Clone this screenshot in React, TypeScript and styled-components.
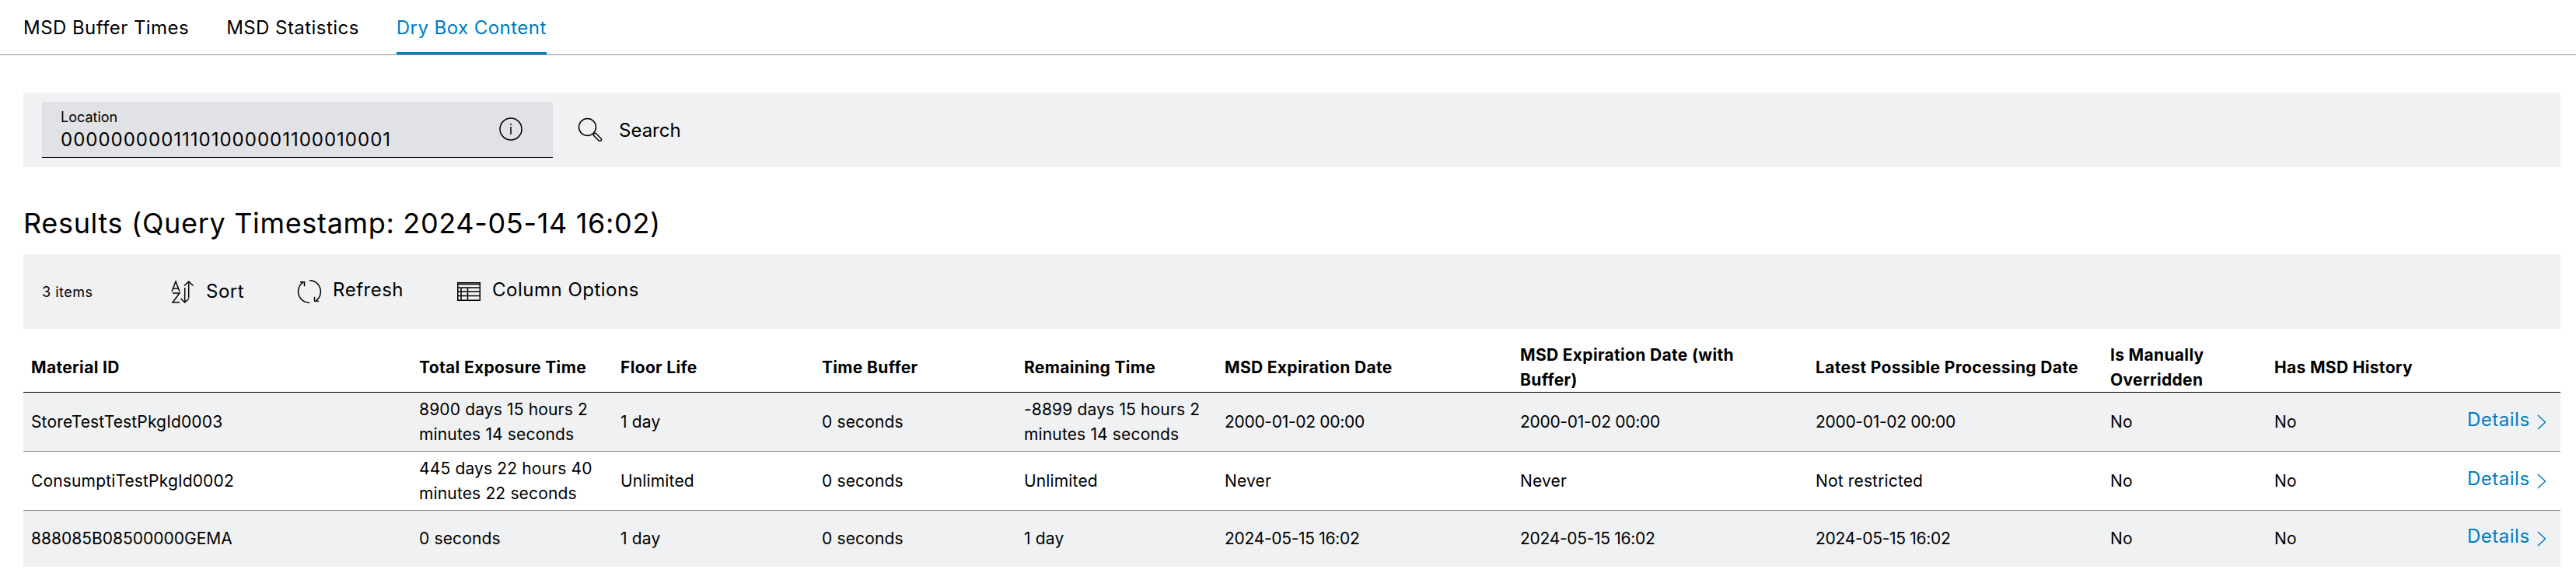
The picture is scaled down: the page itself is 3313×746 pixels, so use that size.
import React from 'react';
import styled, { createGlobalStyle } from 'styled-components';

const Global = createGlobalStyle`
  html, body { margin: 0; padding: 0; background: #fff; }
  body { font-family: "Inter", "Noto Sans", sans-serif; color: #000; }
`;

const Tabs = styled.nav`
  display: flex;
  gap: 48px;
  height: 70px;
  padding-left: 30px;
  border-bottom: 1px solid #8a9097;
`;
const Tab = styled.div<{ $active?: boolean }>`
  display: flex;
  align-items: center;
  box-sizing: border-box;
  height: 70px;
  font-size: 24px;
  letter-spacing: 0.45px;
  color: ${p => (p.$active ? '#007bc0' : '#000')};
  border-bottom: 3px solid ${p => (p.$active ? '#007bc0' : 'transparent')};
  border-top: 3px solid transparent;
`;
const Content = styled.main`
  padding: 48px 20px 0 30px;
`;
const SearchBar = styled.section`
  display: flex;
  align-items: center;
  height: 96px;
  padding-left: 24px;
  background: #eff1f2;
`;
const Field = styled.div`
  position: relative;
  box-sizing: border-box;
  width: 657px;
  height: 72px;
  padding: 12px 24px 0;
  background: #e0e2e5;
  border-bottom: 1px solid #000;
`;
const FieldLabel = styled.div`
  font-size: 18px;
  line-height: 16px;
`;
const FieldValue = styled.div`
  font-size: 24px;
  line-height: 36px;
  margin-top: 3px;
  letter-spacing: 1px;
`;
const FieldIcon = styled.svg`
  position: absolute;
  right: 36px;
  top: 17px;
  width: 36px;
  height: 36px;
`;
const SearchButton = styled.button`
  display: flex;
  align-items: center;
  gap: 19px;
  margin-left: 30px;
  padding: 0;
  border: 0;
  background: none;
  font: inherit;
  font-size: 24px;
  color: #000;
`;
const Title = styled.h2`
  margin: 0;
  padding-top: 48px;
  height: 64px;
  font-size: 36px;
  font-weight: 400;
  line-height: 48px;
  letter-spacing: 0.67px;
`;
const Toolbar = styled.section`
  display: flex;
  align-items: center;
  gap: 66px;
  height: 96px;
  padding-left: 24px;
  background: #eff1f2;
`;
const Count = styled.div`
  width: 97px;
  font-size: 18px;
  letter-spacing: 0.5px;
`;
const ToolButton = styled.button`
  display: flex;
  align-items: center;
  gap: 12px;
  padding: 0;
  border: 0;
  background: none;
  font: inherit;
  color: #000;
`;
const ToolLabel = styled.span<{ $raised?: boolean }>`
  font-size: 24px;
  line-height: 36px;
  letter-spacing: 0.5px;
  padding-bottom: ${p => (p.$raised ? '4px' : '0')};
`;
const Icon = styled.svg`
  width: 36px;
  height: 36px;
  flex: none;
  fill: none;
  stroke: #000;
  stroke-width: 1.5;
`;
const Table = styled.table`
  width: 100%;
  margin-top: 18px;
  border-collapse: separate;
  border-spacing: 0;
  table-layout: fixed;
  font-size: 21px;
  line-height: 31.5px;
`;
const HeadCell = styled.th`
  padding: 0 28px 0 10px;
  height: 63px;
  text-align: left;
  font-weight: 700;
  letter-spacing: 0.33px;
  vertical-align: middle;
  border-bottom: 1px solid #000;
`;
const Row = styled.tr<{ $alt?: boolean }>`
  height: 72px;
  background: ${p => (p.$alt ? '#eff1f2' : '#fff')};
  &:not(:last-child) > td {
    border-bottom: 1px solid #8a9097;
  }
`;
const Cell = styled.td<{ $tracking?: string }>`
  padding: 6px 10px;
  vertical-align: middle;
  letter-spacing: ${p => p.$tracking ?? '0.15px'};
`;
const DetailsCell = styled(Cell)`
  padding-right: 19px;
`;
const DetailsLink = styled.a`
  display: flex;
  justify-content: flex-end;
  align-items: center;
  gap: 9px;
  color: #007bc0;
  font-size: 24px;
  letter-spacing: 0.5px;
`;
const DetailsText = styled.span`
  line-height: 30px;
  padding-bottom: 6px;
`;
const Chevron = styled.svg`
  width: 12px;
  height: 20px;
  fill: none;
  stroke: #007bc0;
  stroke-width: 1.5;
`;

const widths = [499, 259, 259, 260, 258, 380, 380, 379, 211, 248, 130];
const headers = ['Material ID', 'Total Exposure Time', 'Floor Life', 'Time Buffer', 'Remaining Time', 'MSD Expiration Date', 'MSD Expiration Date (with Buffer)', 'Latest Possible Processing Date', 'Is Manually Overridden', 'Has MSD History', ''];
const rows = [
  ['StoreTestTestPkgId0003', '8900 days 15 hours 2 minutes 14 seconds', '1 day', '0 seconds', '-8899 days 15 hours 2 minutes 14 seconds', '2000-01-02 00:00', '2000-01-02 00:00', '2000-01-02 00:00', 'No', 'No'],
  ['ConsumptiTestPkgId0002', '445 days 22 hours 40 minutes 22 seconds', 'Unlimited', '0 seconds', 'Unlimited', 'Never', 'Never', 'Not restricted', 'No', 'No'],
  ['888085B08500000GEMA', '0 seconds', '1 day', '0 seconds', '1 day', '2024-05-15 16:02', '2024-05-15 16:02', '2024-05-15 16:02', 'No', 'No'],
];

const trackingOf = (value: string) => {
  if (/^\d{4}-\d{2}-\d{2}/.test(value)) return '-0.3px';
  if (/^\d{6}/.test(value)) return '0';
  return undefined;
};

export default function App() {
  return (
    <>
      <Global />
      <Tabs>
        <Tab>MSD Buffer Times</Tab>
        <Tab>MSD Statistics</Tab>
        <Tab $active>Dry Box Content</Tab>
      </Tabs>
      <Content>
        <SearchBar>
          <Field>
            <FieldLabel>Location</FieldLabel>
            <FieldValue>00000000011101000001100010001</FieldValue>
            <FieldIcon viewBox="0 0 36 36" fill="none" stroke="#000" strokeWidth="1.5">
              <circle cx="18" cy="18" r="14" />
              <path d="M18 15v10" />
              <path d="M18 11v2" />
            </FieldIcon>
          </Field>
          <SearchButton>
            <Icon viewBox="0 0 36 36">
              <circle cx="14.5" cy="14.5" r="11" />
              <rect x="23" y="21" width="12.5" height="4" rx="2" transform="rotate(45 23 23)" />
            </Icon>
            Search
          </SearchButton>
        </SearchBar>
        <Title>Results (Query Timestamp: 2024-05-14 16:02)</Title>
        <Toolbar>
          <Count>3 items</Count>
          <ToolButton>
            <Icon viewBox="0 0 36 36">
              <path d="M4 18L9 5l5 13M6 14h6M5 20h9L5 32h9" />
              <path d="M25.7 26V5M20 10.500L25.700 5l5.800 5.500M20.700 13v19M15.500 27l5.200 5 5.300-5" />
            </Icon>
            <ToolLabel>Sort</ToolLabel>
          </ToolButton>
          <ToolButton>
            <Icon viewBox="0 0 36 36">
              <path d="M9.700 6.100A14.500 14.500 0 0 0 18 32.500M6 5.700h5.500v5.600" />
              <path d="M18 3.500a14.500 14.500 0 0 1 8.300 26.400M30 30.300h-5.500v-5.600" />
            </Icon>
            <ToolLabel $raised>Refresh</ToolLabel>
          </ToolButton>
          <ToolButton>
            <Icon viewBox="0 0 36 36">
              <rect x="3.750" y="6.750" width="28.500" height="22.500" />
              <path d="M3.750 8.500h28.500M3.750 13h28.500M3.750 18h28.500M3.750 23.500h28.500M8 13v16M16.500 13v16" />
            </Icon>
            <ToolLabel $raised>Column Options</ToolLabel>
          </ToolButton>
        </Toolbar>
        <Table>
          <colgroup>
            {widths.map((w, i) => (
              <col key={i} style={{ width: w }} />
            ))}
          </colgroup>
          <thead>
            <tr>
              {headers.map((h, i) => (
                <HeadCell key={i}>{h}</HeadCell>
              ))}
            </tr>
          </thead>
          <tbody>
            {rows.map((r, i) => (
              <Row key={i} $alt={i % 2 === 0}>
                {r.map((c, j) => (
                  <Cell key={j} $tracking={trackingOf(c)}>{c}</Cell>
                ))}
                <DetailsCell>
                  <DetailsLink>
                    <DetailsText>Details</DetailsText>
                    <Chevron viewBox="0 0 12 20">
                      <path d="M1 .5L11 10 1 19.500" />
                    </Chevron>
                  </DetailsLink>
                </DetailsCell>
              </Row>
            ))}
          </tbody>
        </Table>
      </Content>
    </>
  );
}
